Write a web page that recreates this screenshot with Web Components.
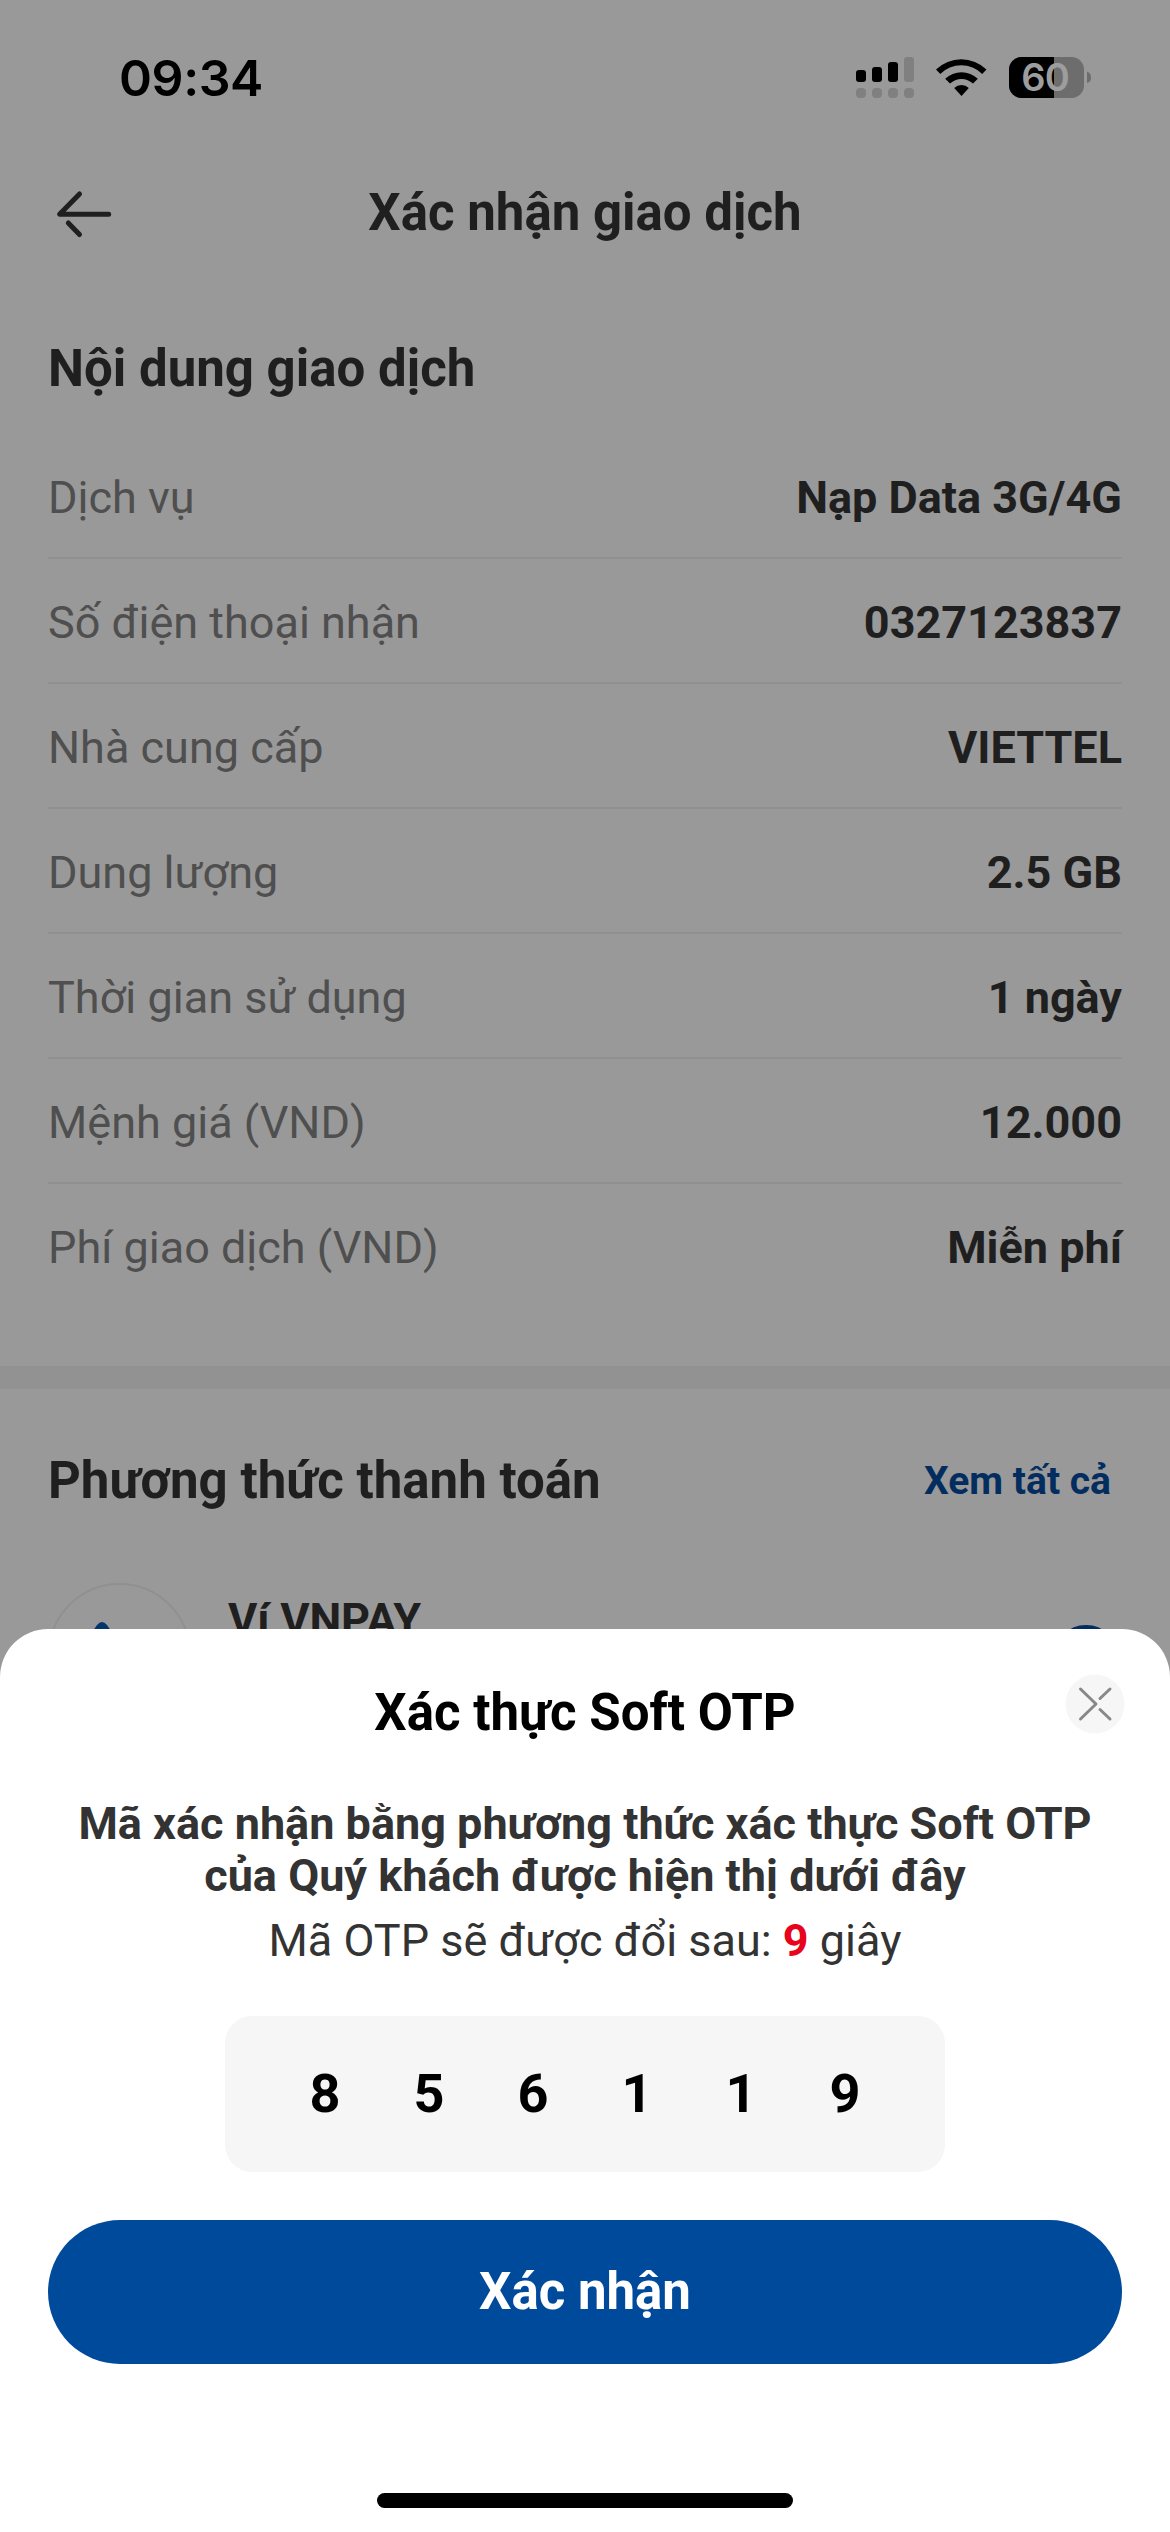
<!DOCTYPE html>
<html lang="vi">
<head>
<meta charset="utf-8">
<title>Xác nhận giao dịch</title>
<style>
html,body{margin:0;padding:0}
body{width:1170px;height:2532px;overflow:hidden;background:#999;font-family:Roboto,"Noto Sans",sans-serif;color:#1f1f1f}
</style>
</head>
<body>
<transfer-screen></transfer-screen>
<script>
const define = (name, html) => customElements.define(name, class extends HTMLElement {
  constructor() {
    super();
    this.attachShadow({ mode: 'open' }).innerHTML = html;
  }
});

define('status-bar', `
<style>
:host{display:flex;justify-content:space-between;align-items:center;height:156px;box-sizing:border-box;padding:0 78px 0 119px;color:#000}
.time{font:600 50px/60px Inter,sans-serif;letter-spacing:-.4px}
.icons{display:flex}
svg{display:block}
</style>
<span class="time">09:34</span>
<svg width="236" height="50" viewBox="856 53 236 50">
  <g fill="#000"><rect x="856" y="70" width="10" height="12" rx="3"/><rect x="872" y="67" width="10" height="15" rx="3"/><rect x="888" y="62" width="10" height="20" rx="3"/></g>
  <g fill="#808080"><rect x="904" y="57" width="10" height="25" rx="3"/><rect x="856" y="88" width="10" height="10" rx="4"/><rect x="872" y="88" width="10" height="10" rx="4"/><rect x="888" y="88" width="10" height="10" rx="4"/><rect x="904" y="88" width="10" height="10" rx="4"/></g>
  <path d="M936 69.500A36.500 36.500 0 0 1 986.500 69.500L982.200 73.900A30 30 0 0 0 940.300 73.900ZM945.200 78.800A23.500 23.500 0 0 1 977.800 78.800L973 83.600A16.500 16.500 0 0 0 950 83.600ZM954.200 88A10.500 10.500 0 0 1 968.800 88L961.500 96Z" fill="#000"/>
  <clipPath id="c"><rect x="1009" y="57" width="75" height="41" rx="12.500"/></clipPath>
  <g clip-path="url(#c)"><rect x="1009" y="57" width="75" height="41" fill="#6d6d6d"/><rect x="1009" y="57" width="45" height="41" fill="#000"/></g>
  <path d="M1087 71.500Q1091 73 1091 77.500T1087 83Z" fill="#6d6d6d"/>
  <text x="1045.200" y="91.400" text-anchor="middle" font-family="Inter,sans-serif" font-weight="600" font-size="38" fill="#9d9d9d" letter-spacing="-.8">60</text>
</svg>`);

define('app-header', `
<style>
:host{display:grid;grid-template-columns:120px 1fr 120px;align-items:center;height:116px}
svg{display:block;margin-left:54px}
h1{margin:0;padding-bottom:2px;text-align:center;font-size:51px;line-height:60px;font-weight:700}
</style>
<svg width="60" height="50" viewBox="54 189 60 50" fill="none" stroke="#1f1f1f" stroke-width="5" stroke-linecap="round" stroke-linejoin="round"><path d="M79.500 194L59.600 214.300H108.700M68.300 223L79.500 234.500"/></svg>
<h1><slot></slot></h1>`);

define('info-row', `
<style>
:host{display:flex;justify-content:space-between;align-items:center;height:125px;padding-top:4px;box-sizing:border-box;border-bottom:2px solid #909090;font-size:45px;line-height:54px}
:host([last]){border-color:transparent}
.l{color:#4f4f4f}.v{font-weight:700}
</style>
<span class="l"><slot name="label"></slot></span><span class="v"><slot></slot></span>`);

define('wallet-option', `
<style>
:host{display:flex;align-items:flex-start;height:143px}
.logo{box-sizing:border-box;width:143px;height:143px;border:2px solid #909090;border-radius:50%}
.name{font-weight:700;font-size:45px;line-height:54px;letter-spacing:-.2px;margin:10px 0 0 37px;flex:1}
svg{display:block}
.radio{box-sizing:border-box;width:64px;height:64px;border:4px solid #032d5f;border-radius:50%;margin:42px 4px 0 0}
</style>
<div class="logo"><svg width="139" height="139" viewBox="50 1585 139 139"><path d="M80 1650L97 1625Q102 1619 107 1625L124 1650Z" fill="#03356c"/></svg></div>
<span class="name"><slot></slot></span><div class="radio"></div>`);

define('otp-sheet', `
<style>
:host{position:absolute;left:0;top:1629px;width:1170px;height:903px;box-sizing:border-box;background:#fff;border-radius:48px 48px 0 0;display:flex;flex-direction:column;align-items:center;color:#333}
h2{margin:54px 0 0;font-size:51px;line-height:60px;font-weight:700;color:#000}
p{margin:0;text-align:center}
.msg{margin-top:55px;font-weight:700;font-size:45px;line-height:52px}
.timer{margin-top:12px;font-size:45px;line-height:54px}
.timer b{color:#e8041c}
.close{position:absolute;left:1065px;top:45px}
.code{display:flex;justify-content:center;align-items:center;width:720px;height:156px;margin-top:48px;border-radius:27px;background:#f6f6f6;color:#000;font-weight:700;font-size:54px;line-height:60px}
.code span{width:104px;text-align:center}
button{border:0;padding:0;margin-top:48px;width:1074px;height:144px;border-radius:72px;background:#004a9c;color:#fff;font:700 51px/60px Roboto,"Noto Sans",sans-serif}
.home{margin-top:129px;width:416px;height:15px;border-radius:8px;background:#000}
</style>
<h2>Xác thực Soft OTP</h2>
<svg class="close" width="60" height="60" viewBox="0 0 60 60"><circle cx="30" cy="30" r="29.500" fill="#f6f6f6"/><path d="M15.500 15L31 30L15.500 45M35 24.500L45 15M35 35.500L45 45" fill="none" stroke="#888" stroke-width="3" stroke-linecap="round" stroke-linejoin="round"/></svg>
<p class="msg">Mã xác nhận bằng phương thức xác thực Soft OTP<br>của Quý khách được hiện thị dưới đây</p>
<p class="timer">Mã OTP sẽ được đổi sau: <b>9</b> giây</p>
<div class="code"><span>8</span><span>5</span><span>6</span><span>1</span><span>1</span><span>9</span></div>
<button>Xác nhận</button>
<div class="home"></div>`);

define('transfer-screen', `
<style>
:host{display:block;position:relative;width:1170px;height:2532px;overflow:hidden;background:#999}
section{padding:0 48px}
h2{margin:0;font-size:51px;line-height:60px;font-weight:700}
.content{padding-top:67px}
.rows{padding-top:35px}
.band{height:23px;margin-top:57px;background:#929292}
.head{display:flex;justify-content:space-between;align-items:center;padding:62px 11px 0 0}
.all{color:#032d5f;font-weight:700;font-size:39px;line-height:48px}
wallet-option{margin-top:72px}
</style>
<status-bar></status-bar>
<app-header>Xác nhận giao dịch</app-header>
<section class="content">
<h2>Nội dung giao dịch</h2>
<div class="rows">
<info-row><span slot="label">Dịch vụ</span>Nạp Data 3G/4G</info-row>
<info-row><span slot="label">Số điện thoại nhận</span>0327123837</info-row>
<info-row><span slot="label">Nhà cung cấp</span>VIETTEL</info-row>
<info-row><span slot="label">Dung lượng</span>2.5 GB</info-row>
<info-row><span slot="label">Thời gian sử dụng</span>1 ngày</info-row>
<info-row><span slot="label">Mệnh giá (VND)</span>12.000</info-row>
<info-row last><span slot="label">Phí giao dịch (VND)</span>Miễn phí</info-row>
</div>
</section>
<div class="band"></div>
<section>
<div class="head"><h2>Phương thức thanh toán</h2><span class="all">Xem tất cả</span></div>
<wallet-option>Ví VNPAY</wallet-option>
</section>
<otp-sheet></otp-sheet>`);
</script>
</body>
</html>
